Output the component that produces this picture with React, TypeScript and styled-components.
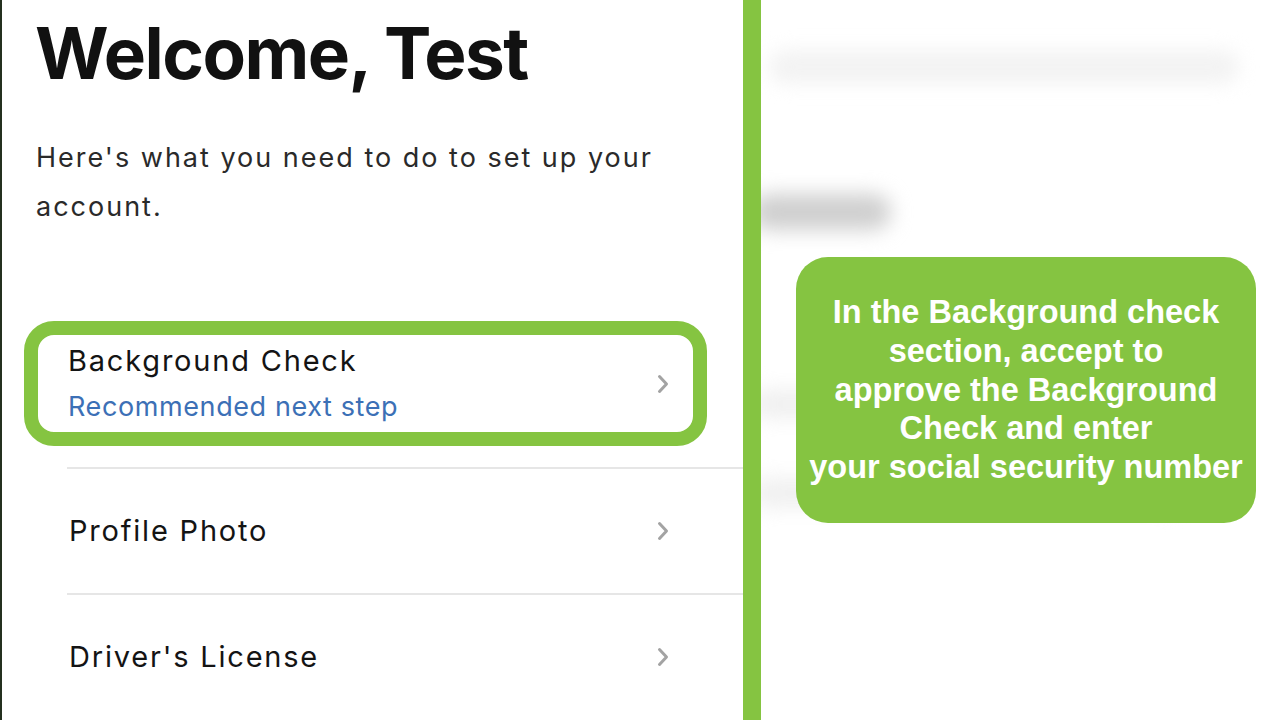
import React from "react";
import styled, { createGlobalStyle } from "styled-components";

const Global = createGlobalStyle`
  html, body { margin: 0; padding: 0; background: #ffffff; }
  body { width: 1280px; height: 720px; overflow: hidden; }
  * { box-sizing: border-box; }
`;

const GREEN = "#85c441";

const Page = styled.div`
  display: flex;
  width: 1280px;
  height: 720px;
  background: #ffffff;
  overflow: hidden;
`;

const LeftPanel = styled.div`
  width: 743px;
  flex: none;
  height: 720px;
  border-left: 2px solid #24301f;
  display: flex;
  flex-direction: column;
  background: #ffffff;
`;

const Heading = styled.h1`
  margin: 0;
  padding: 18px 0 0 33px;
  font-family: Inter, "Liberation Sans", sans-serif;
  font-weight: 700;
  font-size: 71px;
  line-height: 71px;
  letter-spacing: -1.5px;
  color: #111111;
`;

const Intro = styled.p`
  margin: 44px 0 0 34px;
  width: 660px;
  font-family: Inter, "Liberation Sans", sans-serif;
  font-weight: 400;
  font-size: 27px;
  line-height: 49px;
  letter-spacing: 2px;
  color: #2a2a2a;
`;

const List = styled.div`
  margin-top: 90px;
  display: flex;
  flex-direction: column;
`;

const Highlight = styled.div`
  margin-left: 22px;
  width: 683px;
  height: 125px;
  border: 14px solid ${GREEN};
  border-radius: 30px;
  display: flex;
  align-items: center;
  padding: 0 23px 0 30px;
  margin-bottom: 21px;
`;

const Row = styled.div`
  margin-left: 65px;
  height: 126px;
  border-top: 2px solid #e6e6e6;
  display: flex;
  align-items: center;
  padding: 0 73px 0 2px;
`;

const RowText = styled.div`
  flex: 1;
  display: flex;
  flex-direction: column;
  justify-content: center;
`;

const Title = styled.div`
  font-family: Inter, "Liberation Sans", sans-serif;
  font-size: 29px;
  line-height: 46px;
  letter-spacing: 1.8px;
  color: #141414;
`;

const Subtitle = styled.div`
  font-family: Inter, "Liberation Sans", sans-serif;
  font-size: 27px;
  line-height: 46px;
  letter-spacing: 0.6px;
  color: #3c70b6;
`;

const Chevron = () => (
  <svg width="14" height="20" viewBox="0 0 14 20" aria-hidden="true">
    <polyline
      points="3.5,2.5 10.5,10 3.5,17.5"
      fill="none"
      stroke="#a3a3a3"
      strokeWidth="3"
      strokeLinecap="round"
      strokeLinejoin="round"
    />
  </svg>
);

const GreenBar = styled.div`
  width: 18px;
  flex: none;
  height: 720px;
  background: ${GREEN};
`;

const RightPanel = styled.div`
  flex: 1;
  height: 720px;
  display: grid;
  background: #ffffff;
  overflow: hidden;
`;

const Backdrop = styled.div`
  grid-area: 1 / 1;
  display: flex;
  flex-direction: column;
  padding-top: 50px;
`;

const Blur = styled.div<{ $w: number; $h: number; $top: number; $left: number; $tone: string; $blur: number }>`
  width: ${(p) => p.$w}px;
  height: ${(p) => p.$h}px;
  margin-top: ${(p) => p.$top}px;
  margin-left: ${(p) => p.$left}px;
  background: ${(p) => p.$tone};
  border-radius: 20px;
  filter: blur(${(p) => p.$blur}px);
`;

const Overlay = styled.div`
  grid-area: 1 / 1;
  position: relative;
  z-index: 1;
  padding: 257px 0 0 35px;
`;

const Callout = styled.div`
  width: 460px;
  height: 266px;
  background: ${GREEN};
  border-radius: 32px;
  display: flex;
  align-items: center;
  justify-content: center;
  text-align: center;
  font-family: "Liberation Sans", Arial, sans-serif;
  font-weight: 700;
  font-size: 32.5px;
  line-height: 38.8px;
  color: #ffffff;
  white-space: nowrap;
`;

export default function App() {
  return (
    <>
      <Global />
      <Page>
        <LeftPanel>
          <Heading>Welcome, Test</Heading>
          <Intro>Here's what you need to do to set up your account.</Intro>
          <List>
            <Highlight>
              <RowText>
                <Title>Background Check</Title>
                <Subtitle>Recommended next step</Subtitle>
              </RowText>
              <Chevron />
            </Highlight>
            <Row>
              <RowText>
                <Title>Profile Photo</Title>
              </RowText>
              <Chevron />
            </Row>
            <Row>
              <RowText>
                <Title>Driver's License</Title>
              </RowText>
              <Chevron />
            </Row>
          </List>
        </LeftPanel>
        <GreenBar />
        <RightPanel>
          <Backdrop>
            <Blur $w={470} $h={34} $top={0} $left={8} $tone="#f3f3f3" $blur={9} />
            <Blur $w={140} $h={36} $top={110} $left={-10} $tone="#cfcfcf" $blur={10} />
            <Blur $w={420} $h={28} $top={160} $left={-10} $tone="#efefef" $blur={10} />
            <Blur $w={430} $h={30} $top={60} $left={-10} $tone="#f0f0f0" $blur={10} />
          </Backdrop>
          <Overlay>
            <Callout>
              In the Background check
              <br />
              section, accept to
              <br />
              approve the Background
              <br />
              Check and enter
              <br />
              your social security number
            </Callout>
          </Overlay>
        </RightPanel>
      </Page>
    </>
  );
}
